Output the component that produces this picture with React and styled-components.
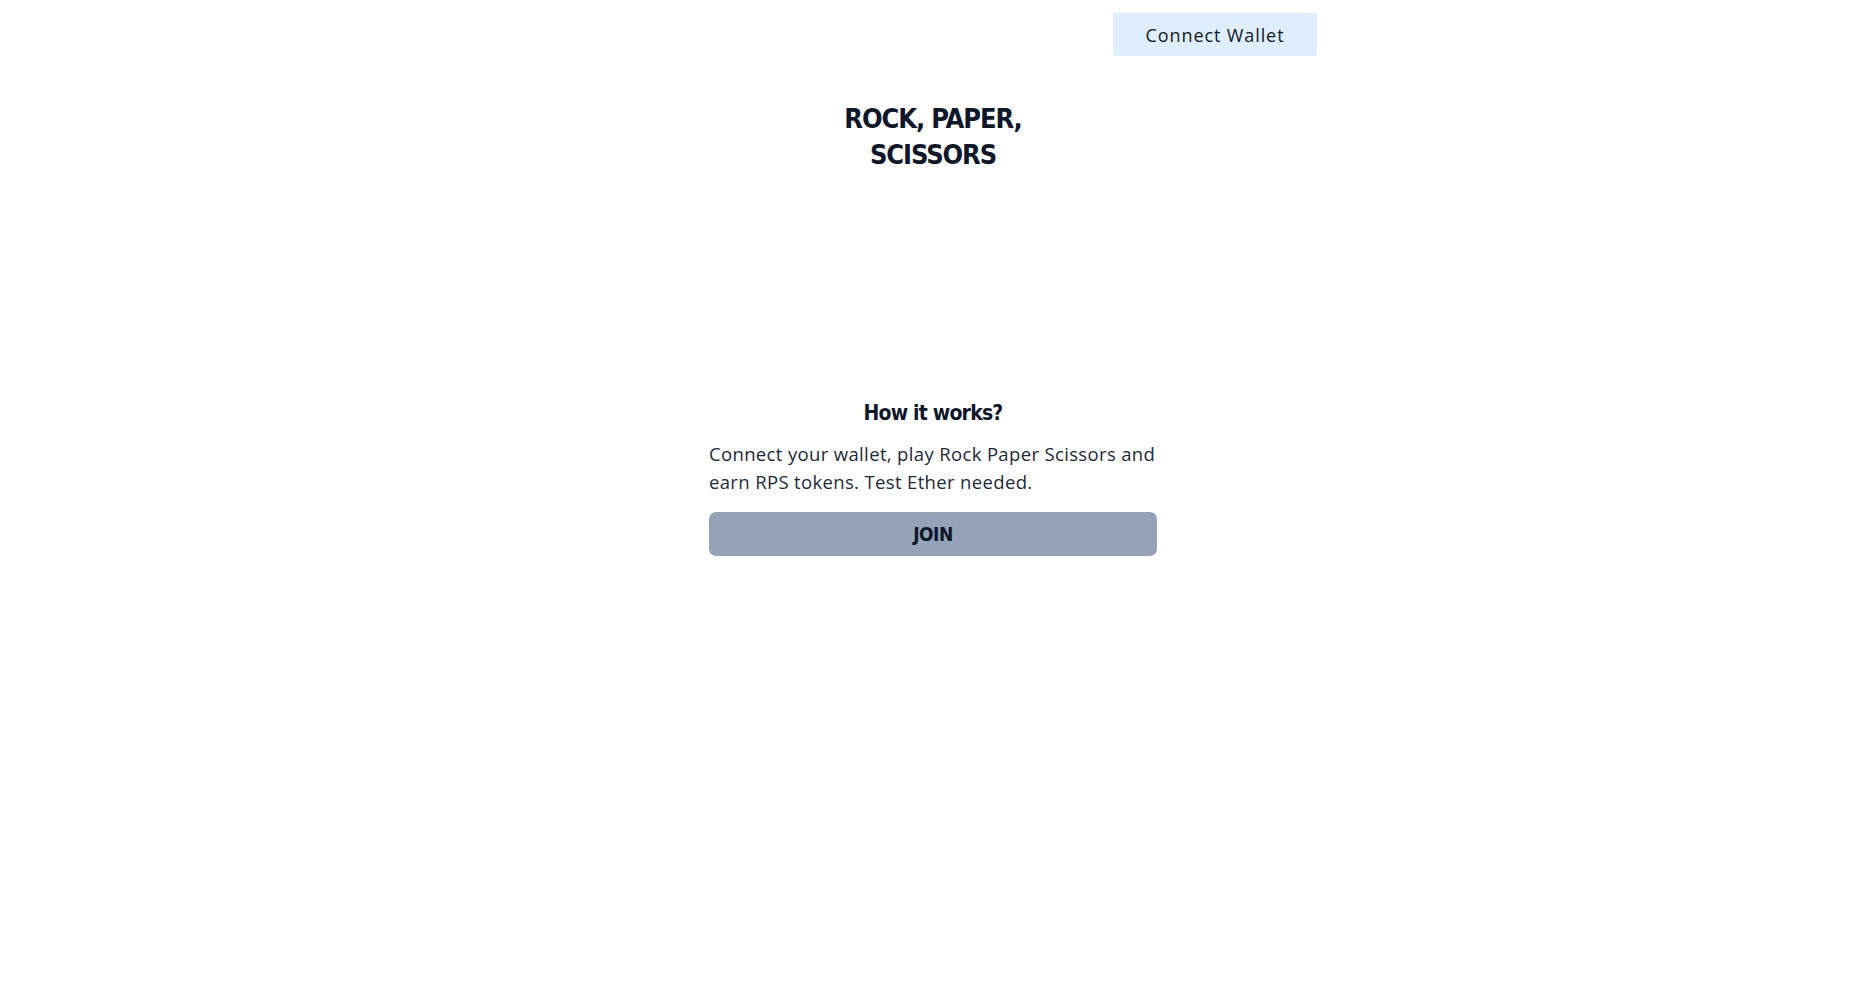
import React from 'react'
import styled, { createGlobalStyle } from 'styled-components'

const GlobalStyle = createGlobalStyle`
  html, body {
    margin: 0;
    padding: 0;
    background: #ffffff;
    font-family: "Open Sans", "Noto Sans", sans-serif;
    color: #0f172a;
  }
`

const Page = styled.div`
  max-width: 768px;
  margin: 0 auto;
  padding-top: 13px;
  display: flex;
  flex-direction: column;
  align-items: center;
`

const TopBar = styled.header`
  width: 100%;
  display: flex;
  justify-content: flex-end;
`

const WalletButton = styled.button`
  width: 204px;
  height: 43px;
  border: none;
  border-radius: 2px;
  background: #dfeefc;
  color: #111827;
  font-family: "Open Sans", "Noto Sans", sans-serif;
  font-size: 18px;
  font-weight: 500;
  letter-spacing: 0.9px;
  cursor: pointer;
`

const Title = styled.h1`
  margin: 45px 0 0;
  max-width: 200px;
  text-align: center;
  font-family: "DejaVu Sans Condensed", sans-serif;
  font-size: 27px;
  line-height: 36px;
  font-weight: 700;
  letter-spacing: -1.1px;
  color: #0f172a;
`

const Info = styled.section`
  width: 448px;
  margin-top: 224px;
  display: flex;
  flex-direction: column;
  align-items: center;
`

const InfoHeading = styled.h2`
  margin: 0;
  font-family: "DejaVu Sans Condensed", sans-serif;
  font-size: 21px;
  line-height: 32px;
  font-weight: 600;
  letter-spacing: -0.8px;
  color: #0f172a;
`

const InfoText = styled.p`
  margin: 11px 0 0;
  width: 100%;
  font-family: "Open Sans", "Noto Sans", sans-serif;
  font-size: 18.5px;
  line-height: 28px;
  font-weight: 400;
  letter-spacing: 0.35px;
  color: #1e293b;
`

const JoinButton = styled.button`
  margin-top: 16px;
  width: 100%;
  height: 44px;
  border: none;
  border-radius: 7px;
  background: #94a3b8;
  color: #0f172a;
  font-family: "DejaVu Sans Condensed", sans-serif;
  font-size: 19px;
  font-weight: 700;
  letter-spacing: -0.5px;
  cursor: pointer;
`

export default function App() {
  return (
    <>
      <GlobalStyle />
      <Page>
        <TopBar>
          <WalletButton>Connect Wallet</WalletButton>
        </TopBar>
        <Title>ROCK, PAPER, SCISSORS</Title>
        <Info>
          <InfoHeading>How it works?</InfoHeading>
          <InfoText>
            Connect your wallet, play Rock Paper Scissors and earn RPS tokens. Test Ether needed.
          </InfoText>
          <JoinButton>JOIN</JoinButton>
        </Info>
      </Page>
    </>
  )
}
